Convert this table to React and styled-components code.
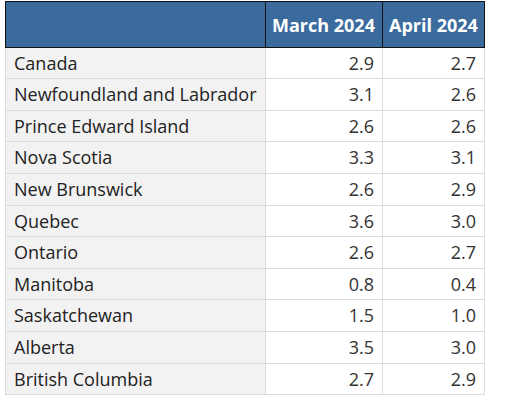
import React from "react";
import styled, { createGlobalStyle } from "styled-components";

const Global = createGlobalStyle`
  html, body { margin: 0; padding: 0; background: #ffffff; }
  body { font-family: "Open Sans", "Noto Sans", sans-serif; }
`;

const Wrap = styled.div`
  padding: 1px 0 0 5px;
`;

const Table = styled.table`
  border-collapse: collapse;
  table-layout: fixed;
  width: 479px;
  font-size: 18px;
  line-height: 22.6px;
  color: #222;
`;

const HeadCell = styled.th`
  background: #3b6b9d;
  color: #ffffff;
  font-weight: 700;
  text-align: right;
  padding: 12px 8px 10px 6px;
  border: 1px solid #111;
  white-space: nowrap;
`;

const NameCell = styled.td`
  background: #f2f2f2;
  text-align: left;
  padding: 4px 8px;
  border: 1px solid #dcdcdc;
  white-space: nowrap;
`;

const NumCell = styled.td`
  background: #ffffff;
  text-align: right;
  padding: 4px 8px;
  border: 1px solid #dcdcdc;
  color: #333;
`;

const rows = [
  ["Canada", "2.9", "2.7"],
  ["Newfoundland and Labrador", "3.1", "2.6"],
  ["Prince Edward Island", "2.6", "2.6"],
  ["Nova Scotia", "3.3", "3.1"],
  ["New Brunswick", "2.6", "2.9"],
  ["Quebec", "3.6", "3.0"],
  ["Ontario", "2.6", "2.7"],
  ["Manitoba", "0.8", "0.4"],
  ["Saskatchewan", "1.5", "1.0"],
  ["Alberta", "3.5", "3.0"],
  ["British Columbia", "2.7", "2.9"],
];

export default function App() {
  return (
    <Wrap>
      <Global />
      <Table>
        <colgroup>
          <col style={{ width: 260 }} />
          <col style={{ width: 117 }} />
          <col style={{ width: 102 }} />
        </colgroup>
        <thead>
          <tr>
            <HeadCell />
            <HeadCell>March 2024</HeadCell>
            <HeadCell>April 2024</HeadCell>
          </tr>
        </thead>
        <tbody>
          {rows.map((r) => (
            <tr key={r[0]}>
              <NameCell>{r[0]}</NameCell>
              <NumCell>{r[1]}</NumCell>
              <NumCell>{r[2]}</NumCell>
            </tr>
          ))}
        </tbody>
      </Table>
    </Wrap>
  );
}
